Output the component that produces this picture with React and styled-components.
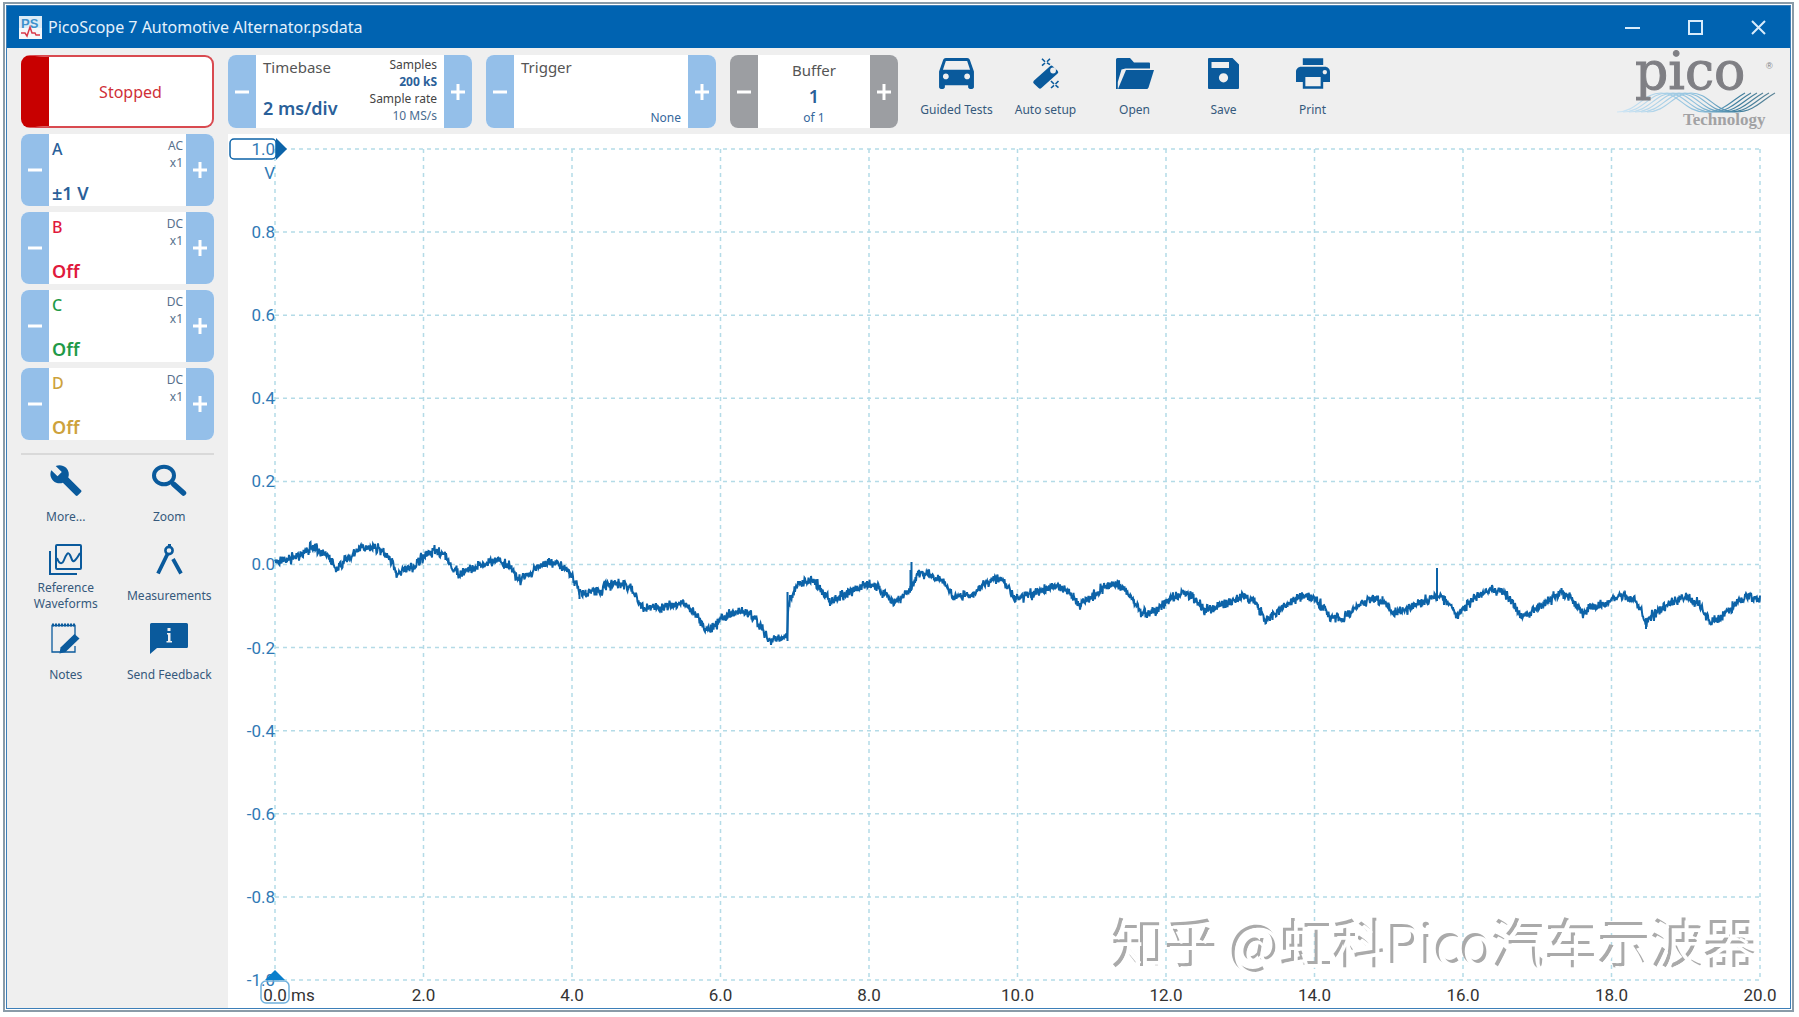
import React from 'react';
import styled, { createGlobalStyle } from 'styled-components';

const CHANNELS = [
  { name: 'A', range: '±1 V', coupling: 'AC', color: '#2a6099' },
  { name: 'B', range: 'Off', coupling: 'DC', color: '#e0193c' },
  { name: 'C', range: 'Off', coupling: 'DC', color: '#1f9a48' },
  { name: 'D', range: 'Off', coupling: 'DC', color: '#cda23c' }
];

const VOLTS = ['1.0', '0.8', '0.6', '0.4', '0.2', '0.0', '-0.2', '-0.4', '-0.6', '-0.8', '-1.0'];
const TIMES = ['0.0', '2.0', '4.0', '6.0', '8.0', '10.0', '12.0', '14.0', '16.0', '18.0', '20.0'];

const PLOT_W = 1485;
const PLOT_H = 831;

// x, y pairs in plot units; the sampled noise is added on top
const TRACE = [
  [0, 412], [15, 410], [25, 405], [37, 399], [48, 402], [55, 410], [62, 420], [71, 411], [82, 401],
  [95, 397], [108, 402], [116, 412], [122, 424], [130, 421], [138, 419], [148, 408], [160, 401],
  [169, 405], [177, 418], [184, 425], [197, 419], [211, 414], [224, 411], [233, 416], [243, 431],
  [253, 426], [265, 416], [276, 412], [287, 416], [295, 424], [304, 441], [309, 444], [319, 442],
  [327, 442], [329, 437], [348, 434], [356, 440], [363, 452], [368, 460], [383, 458], [397, 455],
  [407, 454], [415, 460], [424, 471], [430, 480], [436, 479], [447, 469], [464, 462], [476, 466],
  [486, 477], [493, 492], [502, 489], [512, 490], [513, 462], [515, 451], [519, 441], [524, 435],
  [534, 432], [543, 436], [549, 444], [555, 453], [564, 448], [576, 441], [594, 435], [604, 439],
  [613, 448], [618, 454], [626, 449], [636, 440], [638, 433], [644, 426], [653, 424], [666, 431],
  [673, 439], [679, 451], [688, 446], [698, 445], [708, 435], [721, 429], [729, 432], [736, 444],
  [741, 449], [758, 444], [781, 437], [793, 441], [799, 451], [804, 457], [814, 449], [828, 440],
  [839, 434], [849, 440], [859, 452], [867, 464], [881, 461], [894, 450], [908, 444], [918, 448],
  [924, 456], [930, 462], [944, 457], [968, 447], [979, 452], [991, 471], [1009, 458], [1027, 446],
  [1039, 450], [1050, 460], [1055, 471], [1058, 469], [1069, 469], [1083, 456], [1097, 449],
  [1109, 454], [1119, 465], [1135, 459], [1153, 450], [1165, 447], [1174, 454], [1183, 469],
  [1185, 463], [1198, 450], [1212, 441], [1226, 442], [1235, 450], [1246, 466], [1256, 463],
  [1272, 452], [1286, 444], [1296, 449], [1308, 464], [1317, 458], [1333, 455], [1345, 446],
  [1358, 450], [1366, 461], [1371, 475], [1374, 470], [1388, 459], [1400, 451], [1410, 448],
  [1422, 453], [1435, 473], [1444, 469], [1459, 456], [1472, 446], [1485, 451]
];

const SPIKES = 'M512.5 492V443M635.5 441V421M636.5 441V413M1162 452V419M1371 474V480M304.5 440V450';

function buildTrace() {
  let seed = 7;
  const random = () => {
    seed = (seed * 16807) % 2147483647;
    return seed / 2147483647 - 0.5;
  };
  const points = [];
  let i = 0;
  for (let x = 0; x <= PLOT_W; x += 0.5) {
    while (i < TRACE.length - 2 && TRACE[i + 1][0] <= x) i += 1;
    const [x1, y1] = TRACE[i];
    const [x2, y2] = TRACE[i + 1];
    const y = y1 + ((y2 - y1) * (x - x1)) / (x2 - x1);
    points.push(`${x} ${(y + (random() + random() + random()) * 5).toFixed(1)}`);
  }
  return `M${points.join('L')}`;
}

const TRACE_PATH = buildTrace();

const CarIcon = () => (
  <svg width="35" height="31" viewBox="3 5 18 16" fill="currentColor">
    <path d="M18.92 6.01C18.72 5.42 18.16 5 17.5 5h-11c-.66 0-1.21.42-1.42 1.01L3 12v8c0 .55.45 1 1 1h1c.55 0 1-.45 1-1v-1h12v1c0 .55.45 1 1 1h1c.55 0 1-.45 1-1v-8l-2.08-5.99zM6.5 16c-.83 0-1.5-.67-1.5-1.5S5.67 13 6.5 13s1.5.67 1.5 1.5S7.33 16 6.5 16zm11 0c-.83 0-1.5-.67-1.5-1.5s.67-1.5 1.5-1.5 1.5.67 1.5 1.5-.67 1.5-1.5 1.5zM5 11l1.5-4.5h11L19 11H5z" />
  </svg>
);

const WandIcon = () => (
  <svg width="26" height="31" viewBox="0 0 26 31" fill="none" stroke="currentColor">
    <path
      fill="currentColor"
      stroke="none"
      fillRule="evenodd"
      d="M17 8.3a2 2 0 0 1 2.8 0l4.8 4.4a2 2 0 0 1 0 2.8L8.4 30a2 2 0 0 1-2.8 0L.8 25.5a2 2 0 0 1 0-2.8zM20 9.6a2.9 2.9 0 1 0 .1 5.8 2.9 2.9 0 0 0-.1-5.8z"
    />
    <path d="M9 .8l3 3M17 .8l-3 3M9 7.6l3-2.6M17 6.6l-3-1.8" strokeWidth="1.6" />
    <path d="M18 23l3 3M25.5 23l-3 3M18 30l3-2.6M25.5 29.6l-3-2.4" strokeWidth="1.6" />
  </svg>
);

const FolderIcon = () => (
  <svg width="38" height="31" viewBox="0 0 38 31" fill="currentColor">
    <path d="M0 1.5Q0 0 1.5 0H14l4 4.500H33q1 0 1 1V10.500H9.500L5.500 11.500 1.800 24V31H0z" />
    <path d="M10 12H38L32.500 29.500Q32 31 30.500 31H2z" />
  </svg>
);

const SaveIcon = () => (
  <svg width="31" height="31" viewBox="0 0 31 31" fill="currentColor" fillRule="evenodd">
    <path d="M1 0H24.500L31 6.500V30q0 1-1 1H1q-1 0-1-1V1Q0 0 1 0zM3.500 4V10H21V4zM15.500 15.200a4.600 4.600 0 1 0 .01 9.200 4.600 4.600 0 0 0-.01-9.200z" />
  </svg>
);

const PrintIcon = () => (
  <svg width="34" height="31" viewBox="2 3 20 18" fill="currentColor">
    <path d="M19 8H5c-1.660 0-3 1.340-3 3v6h4v4h12v-4h4v-6c0-1.660-1.340-3-3-3zm-2.500 11.500h-9V14h9v5.500zm2.500-7c-.8 0-1.300-.6-1.300-1.300s.5-1.200 1.300-1.200 1.200.5 1.200 1.200-.5 1.300-1.200 1.300zM18 3H6v4h12V3z" />
  </svg>
);

const WrenchIcon = () => (
  <svg width="32" height="31" viewBox="1 1 22 22" fill="currentColor">
    <path d="M22.700 19l-9.100-9.100c.9-2.300.4-5-1.500-6.900-2-2-5-2.400-7.400-1.300L9 6 6 9 1.600 4.700C.4 7.100.9 10.100 2.900 12.100c1.900 1.900 4.600 2.400 6.900 1.500l9.100 9.100c.4.4 1 .4 1.400 0l2.300-2.300c.5-.4.5-1.100.1-1.400z" />
  </svg>
);

const ZoomIcon = () => (
  <svg width="34" height="31" viewBox="0 0 34 31" fill="none" stroke="currentColor">
    <ellipse cx="12" cy="10.500" rx="10" ry="8.800" strokeWidth="4" />
    <path d="M19 17l3 2.500" strokeWidth="4" />
    <path d="M22 19.500l9.500 8.500" strokeWidth="5.500" strokeLinecap="round" />
  </svg>
);

const WaveformsIcon = () => (
  <svg width="33" height="31" viewBox="0 0 33 31" fill="none" stroke="currentColor" strokeWidth="2">
    <rect x="7" y="1" width="25" height="24" rx="1" />
    <path d="M1 7v23h27" />
    <path d="M8 14c2 6 5 7 7 2s4-9 6-5 2 7 4 6 3-3 6-8" />
  </svg>
);

const CompassIcon = () => (
  <svg width="27" height="31" viewBox="0 0 27 31" fill="none" stroke="currentColor">
    <path d="M13.500 0v3" strokeWidth="3" />
    <circle cx="13" cy="6.500" r="3.600" strokeWidth="2.600" />
    <path d="M11.500 10L2 29.500M17 15l8 14.500" strokeWidth="3.800" />
  </svg>
);

const NotesIcon = () => (
  <svg width="29" height="31" viewBox="0 0 29 31" fill="none" stroke="currentColor">
    <path d="M24 12V2.500H1V29h23v-6" strokeWidth="1.300" />
    <path d="M1 2h23.500" strokeWidth="3" strokeDasharray="2 1" />
    <path d="M23.500 11L28.500 15.500 14.500 29 8.500 30.500 9.500 24.500z" fill="currentColor" stroke="none" />
  </svg>
);

const FeedbackIcon = () => (
  <svg width="38" height="31" viewBox="0 0 38 31">
    <path fill="currentColor" d="M1.500 0H36.500Q38 0 38 1.500V23.500Q38 25 36.500 25H7L0 31V1.500Q0 0 1.500 0z" />
    <path fill="#f0f0f0" d="M17.500 5h3v3h-3zM17 10h3.500v8H22v1.500h-5.500V18H18v-6.500h-1z" />
  </svg>
);

const TOOLS = [
  { label: 'Guided Tests', icon: <CarIcon /> },
  { label: 'Auto setup', icon: <WandIcon /> },
  { label: 'Open', icon: <FolderIcon /> },
  { label: 'Save', icon: <SaveIcon /> },
  { label: 'Print', icon: <PrintIcon /> }
];

const SIDE_TOOLS = [
  { label: 'More...', icon: <WrenchIcon /> },
  { label: 'Zoom', icon: <ZoomIcon /> },
  { label: 'Reference Waveforms', icon: <WaveformsIcon /> },
  { label: 'Measurements', icon: <CompassIcon /> },
  { label: 'Notes', icon: <NotesIcon /> },
  { label: 'Send Feedback', icon: <FeedbackIcon /> }
];

const AppIcon = () => (
  <svg width="23" height="23" viewBox="0 0 23 23">
    <rect width="23" height="23" fill="#f4f7fa" />
    <rect width="23" height="12" fill="#dcebf6" />
    <text x="2" y="12" fontFamily="Liberation Sans" fontWeight="700" fontSize="13" fill="#3f92cc">
      PS
    </text>
    <path d="M2 17h4l2 3 3-9 2 6h3l1 2h4" fill="none" stroke="#d8394a" strokeWidth="1.500" />
  </svg>
);

function Logo() {
  return (
    <LogoSvg viewBox="0 0 162 73" role="img" aria-label="Pico Technology">
      <defs>
        <linearGradient id="wave" gradientUnits="userSpaceOnUse" x1="0" x2="160" y1="0" y2="0">
          <stop offset="0" stopColor="#cfe6f5" />
          <stop offset="0.5" stopColor="#8dc0dd" />
          <stop offset="0.75" stopColor="#3f7f9f" />
          <stop offset="1" stopColor="#5f8596" />
        </linearGradient>
      </defs>
      <g fill="none" stroke="url(#wave)" strokeWidth="1.200">
        {[0, 6, 12, 18, 24, 30].map(dx => (
          <path key={dx} d={`M${dx} 57C${dx + 20} 57 ${dx + 26} 38 ${dx + 44} 38S${dx + 68} 57 ${dx + 88} 57S${dx + 116} 44 ${dx + 128} 38`} />
        ))}
      </g>
      <text x="18" y="34" fontFamily="DejaVu Serif" fontSize="52" fill="#7f7f84" stroke="#7f7f84">
        pico
      </text>
      <text x="149" y="14" fontFamily="Liberation Sans" fontSize="9" fill="#7f7f84">
        ®
      </text>
      <text x="66" y="70" fontFamily="Liberation Serif" fontWeight="700" fontSize="17" fill="#a2a2a4">
        Technology
      </text>
    </LogoSvg>
  );
}

function Stepper({ color, label, children }) {
  return (
    <StepperBox>
      <StepButton $color={color} aria-label={`${label} down`}>
        <svg width="16" height="16" viewBox="0 0 16 16" stroke="#fff" strokeWidth="3">
          <path d="M1 8h14" />
        </svg>
      </StepButton>
      {children}
      <StepButton $color={color} aria-label={`${label} up`}>
        <svg width="16" height="16" viewBox="0 0 16 16" stroke="#fff" strokeWidth="3">
          <path d="M1 8h14M8 0v16" />
        </svg>
      </StepButton>
    </StepperBox>
  );
}

function Plot() {
  const lines = [];
  for (let i = 0; i <= 10; i += 1) {
    lines.push(`M${i * 148.5} 0V${PLOT_H}M0 ${i * 83.1}H${PLOT_W}`);
  }
  return (
    <PlotSvg viewBox={`0 0 ${PLOT_W} ${PLOT_H}`} preserveAspectRatio="none">
      <path d={lines.join('')} stroke="#b4dbe7" strokeWidth="1.500" strokeDasharray="4 4" vectorEffect="non-scaling-stroke" />
      <path d={TRACE_PATH} stroke="#0c63a8" strokeWidth="2" vectorEffect="non-scaling-stroke" />
      <path d={SPIKES} stroke="#0c63a8" strokeWidth="2" vectorEffect="non-scaling-stroke" />
    </PlotSvg>
  );
}

function App() {
  return (
    <>
      <GlobalStyle />
      <Frame>
        <Window>
          <TitleBar>
            <AppIcon />
            <Title>PicoScope 7 Automotive Alternator.psdata</Title>
            <WindowButton aria-label="Minimize">
              <svg width="15" height="15" stroke="#d9ecfb" strokeWidth="2">
                <path d="M0 8h15" />
              </svg>
            </WindowButton>
            <WindowButton aria-label="Maximize">
              <svg width="15" height="15" fill="none" stroke="#d9ecfb" strokeWidth="2">
                <rect x="1" y="1" width="13" height="13" />
              </svg>
            </WindowButton>
            <WindowButton aria-label="Close">
              <svg width="15" height="15" stroke="#d9ecfb" strokeWidth="2">
                <path d="M1 1l13 13M14 1L1 14" />
              </svg>
            </WindowButton>
          </TitleBar>
          <Body>
            <Sidebar>
              <StopButton>Stopped</StopButton>
              {CHANNELS.map(channel => (
                <Stepper key={channel.name} color="#94bfe9" label={`Channel ${channel.name}`}>
                  <ChannelPanel>
                    <ChannelMain $color={channel.color}>
                      <span>{channel.name}</span>
                      <strong>{channel.range}</strong>
                    </ChannelMain>
                    <ChannelSide>
                      <span>{channel.coupling}</span>
                      <span>x1</span>
                    </ChannelSide>
                  </ChannelPanel>
                </Stepper>
              ))}
              <Divider />
              <SideTools>
                {SIDE_TOOLS.map(tool => (
                  <SideTool key={tool.label}>
                    {tool.icon}
                    <SideLabel>{tool.label}</SideLabel>
                  </SideTool>
                ))}
              </SideTools>
            </Sidebar>
            <Main>
              <Toolbar>
                <Stepper color="#94bfe9" label="Timebase">
                  <TimebasePanel>
                    <PanelMain>
                      <PanelTitle>Timebase</PanelTitle>
                      <PanelValue>2 ms/div</PanelValue>
                    </PanelMain>
                    <SampleInfo>
                      <span>Samples</span>
                      <strong>200 kS</strong>
                      <span>Sample rate</span>
                      <em>10 MS/s</em>
                    </SampleInfo>
                  </TimebasePanel>
                </Stepper>
                <Stepper color="#94bfe9" label="Trigger">
                  <TriggerPanel>
                    <PanelTitle>Trigger</PanelTitle>
                    <TriggerValue>None</TriggerValue>
                  </TriggerPanel>
                </Stepper>
                <Stepper color="#9c9ea2" label="Buffer">
                  <BufferPanel>
                    <PanelTitle>Buffer</PanelTitle>
                    <PanelValue>1</PanelValue>
                    <BufferCount>of 1</BufferCount>
                  </BufferPanel>
                </Stepper>
                <Tools>
                  {TOOLS.map(tool => (
                    <Tool key={tool.label}>
                      {tool.icon}
                      <span>{tool.label}</span>
                    </Tool>
                  ))}
                </Tools>
                <Logo />
              </Toolbar>
              <Chart>
                <VoltAxis>
                  {VOLTS.map(volt => (
                    <VoltLabel key={volt}>{volt}</VoltLabel>
                  ))}
                  <VoltMarker viewBox="0 0 58 22">
                    <rect x="1" y="1" width="46" height="20" rx="4" fill="none" stroke="#0c63a8" strokeWidth="1.500" />
                    <path d="M47 0l11 11-11 11z" fill="#0c63a8" />
                  </VoltMarker>
                  <VoltUnit>V</VoltUnit>
                </VoltAxis>
                <Plot />
                <TimeAxis>
                  {TIMES.map(time => (
                    <TimeLabel key={time}>{time}</TimeLabel>
                  ))}
                  <TimeUnit>ms</TimeUnit>
                  <TimeMarker viewBox="0 0 32 36">
                    <path d="M6 11L16 1l10 10z" fill="#0a7fcc" />
                    <rect x="2" y="12" width="28" height="22" rx="5" fill="none" stroke="#6fb0dc" strokeWidth="1.500" />
                  </TimeMarker>
                </TimeAxis>
                <Watermark>知乎 @虹科Pico汽车示波器</Watermark>
              </Chart>
            </Main>
          </Body>
        </Window>
      </Frame>
    </>
  );
}

const GlobalStyle = createGlobalStyle`
  * {
    box-sizing: border-box;
  }
  body {
    margin: 0;
    background: #fff;
    font-family: 'Noto Sans', 'Open Sans', sans-serif;
  }
  button {
    padding: 0;
    border: 0;
    background: none;
    font: inherit;
    color: inherit;
  }
  svg {
    display: block;
    flex: none;
    overflow: visible;
  }
`;

const Frame = styled.div`
  display: flex;
  min-height: calc(100vh - 7px);
  margin: 2px 5px 5px 3px;
  padding: 1px;
  border: 2px solid #8a9ba8;
`;

const Window = styled.div`
  display: flex;
  flex-direction: column;
  flex: 1;
  min-width: 0;
  border: 1px solid #3d7fb8;
  background: #efefef;
`;

const TitleBar = styled.header`
  display: flex;
  align-items: center;
  height: 42px;
  padding-left: 12px;
  background: #0063b1;
  color: #e4f1fc;
`;

const Title = styled.h1`
  flex: 1;
  margin: 0 0 0 6px;
  font-size: 16px;
  font-weight: 400;
`;

const WindowButton = styled.button`
  display: flex;
  align-items: center;
  justify-content: center;
  width: 63px;
  height: 100%;
`;

const Body = styled.div`
  display: flex;
  flex: 1;
`;

const Sidebar = styled.aside`
  display: flex;
  flex-direction: column;
  flex: none;
  gap: 6px;
  width: 221px;
  padding: 7px 14px;
`;

const StopButton = styled.button`
  height: 73px;
  border: 2px solid #d94a50;
  border-left: 28px solid #c80000;
  border-radius: 9px;
  background: #fff;
  color: #cf2f38;
  font-size: 16px;
`;

const StepperBox = styled.div`
  display: flex;
  min-height: 72px;
  border-radius: 8px;
  background: #fff;
  overflow: hidden;
`;

const StepButton = styled.button`
  display: flex;
  align-items: center;
  justify-content: center;
  flex: none;
  width: 28px;
  background: ${props => props.$color};
`;

const ChannelPanel = styled.div`
  display: flex;
  justify-content: space-between;
  flex: 1;
  padding: 3px 3px 1px;
`;

const ChannelMain = styled.div`
  display: flex;
  flex-direction: column;
  justify-content: space-between;
  color: ${props => props.$color};
  font-size: 16px;
  font-weight: 500;
  line-height: 24px;

  strong {
    font-weight: 600;
    font-size: 18px;
  }
`;

const ChannelSide = styled.div`
  display: flex;
  flex-direction: column;
  color: #56708c;
  font-size: 12px;
  line-height: 17px;
  text-align: right;
`;

const Divider = styled.hr`
  width: 100%;
  height: 2px;
  margin: 7px 0 4px;
  border: 0;
  background: #d9d9d9;
`;

const SideTools = styled.div`
  display: grid;
  grid-template-columns: 1fr 1fr;
  grid-auto-rows: 79px;
  margin: 0 -7px;
`;

const SideTool = styled.button`
  display: flex;
  flex-direction: column;
  align-items: center;
  padding-bottom: 6px;
  color: #0a5a9c;
`;

const SideLabel = styled.span`
  display: flex;
  align-items: center;
  justify-content: center;
  flex: 1;
  max-width: 96px;
  color: #35597c;
  font-size: 12px;
  line-height: 16px;
`;

const Main = styled.main`
  display: flex;
  flex-direction: column;
  flex: 1;
  min-width: 0;
`;

const Toolbar = styled.div`
  display: flex;
  gap: 14px;
  padding: 7px 11px 6px 0;
`;

const TimebasePanel = styled.div`
  display: flex;
  justify-content: space-between;
  width: 188px;
  padding: 1px 7px 2px;
`;

const PanelMain = styled.div`
  display: flex;
  flex-direction: column;
  gap: 15px;
`;

const PanelTitle = styled.span`
  color: #555;
  font-size: 15px;
  line-height: 22px;
`;

const PanelValue = styled.strong`
  color: #2a6099;
  font-size: 18px;
  font-weight: 600;
  line-height: 30px;
`;

const SampleInfo = styled.div`
  display: flex;
  flex-direction: column;
  color: #444;
  font-size: 12px;
  line-height: 17px;
  text-align: right;

  strong {
    color: #2a6099;
  }
  em {
    color: #4a6c90;
    font-style: normal;
  }
`;

const TriggerPanel = styled.div`
  display: flex;
  flex-direction: column;
  justify-content: space-between;
  width: 174px;
  padding: 1px 7px 2px;
`;

const TriggerValue = styled.span`
  align-self: flex-end;
  color: #35679c;
  font-size: 12px;
  line-height: 17px;
`;

const BufferPanel = styled.div`
  display: flex;
  flex-direction: column;
  align-items: center;
  width: 112px;
  padding-top: 4px;
`;

const BufferCount = styled.span`
  color: #35679c;
  font-size: 12px;
  line-height: 13px;
`;

const Tools = styled.nav`
  display: flex;
  flex: 1;
`;

const Tool = styled.button`
  display: flex;
  flex-direction: column;
  align-items: center;
  gap: 12px;
  width: 89px;
  padding-top: 3px;
  color: #0a5a9c;

  span {
    color: #35597c;
    font-size: 12px;
    line-height: 18px;
  }
`;

const LogoSvg = styled.svg`
  width: 162px;
  height: 73px;
`;

const Chart = styled.section`
  position: relative;
  display: grid;
  grid-template-columns: 47px 1fr;
  grid-template-rows: minmax(400px, 1fr) 28px;
  flex: 1;
  padding: 15px 30px 0 0;
  background: #fff;
  font-family: Roboto, 'Noto Sans', sans-serif;
  font-size: 17px;
`;

const PlotSvg = styled.svg`
  width: 100%;
  height: 0;
  min-height: 100%;
  fill: none;
`;

const VoltAxis = styled.div`
  position: relative;
  display: flex;
  flex-direction: column;
  justify-content: space-between;
  align-items: flex-end;
  color: #2f79b5;
`;

const VoltLabel = styled.span`
  height: 0;
  line-height: 0;
`;

const VoltMarker = styled.svg`
  position: absolute;
  top: -11px;
  left: 1px;
  width: 58px;
  height: 22px;
`;

const VoltUnit = styled.span`
  position: absolute;
  top: 14px;
  right: 0;
  line-height: 20px;
`;

const TimeAxis = styled.div`
  position: relative;
  display: flex;
  grid-column: 2;
  justify-content: space-between;
  color: #333;
  line-height: 30px;
`;

const TimeLabel = styled.span`
  display: flex;
  justify-content: center;
  width: 0;
`;

const TimeUnit = styled.span`
  position: absolute;
  left: 16px;
`;

const TimeMarker = styled.svg`
  position: absolute;
  top: -11px;
  left: -16px;
  width: 32px;
  height: 36px;
`;

const Watermark = styled.div`
  position: absolute;
  right: 31px;
  bottom: 27px;
  color: #fff;
  font-family: 'Noto Sans CJK SC', sans-serif;
  font-size: 53px;
  line-height: 76px;
  text-shadow: -3px -3px 0 #aaa;
`;

export default App;
